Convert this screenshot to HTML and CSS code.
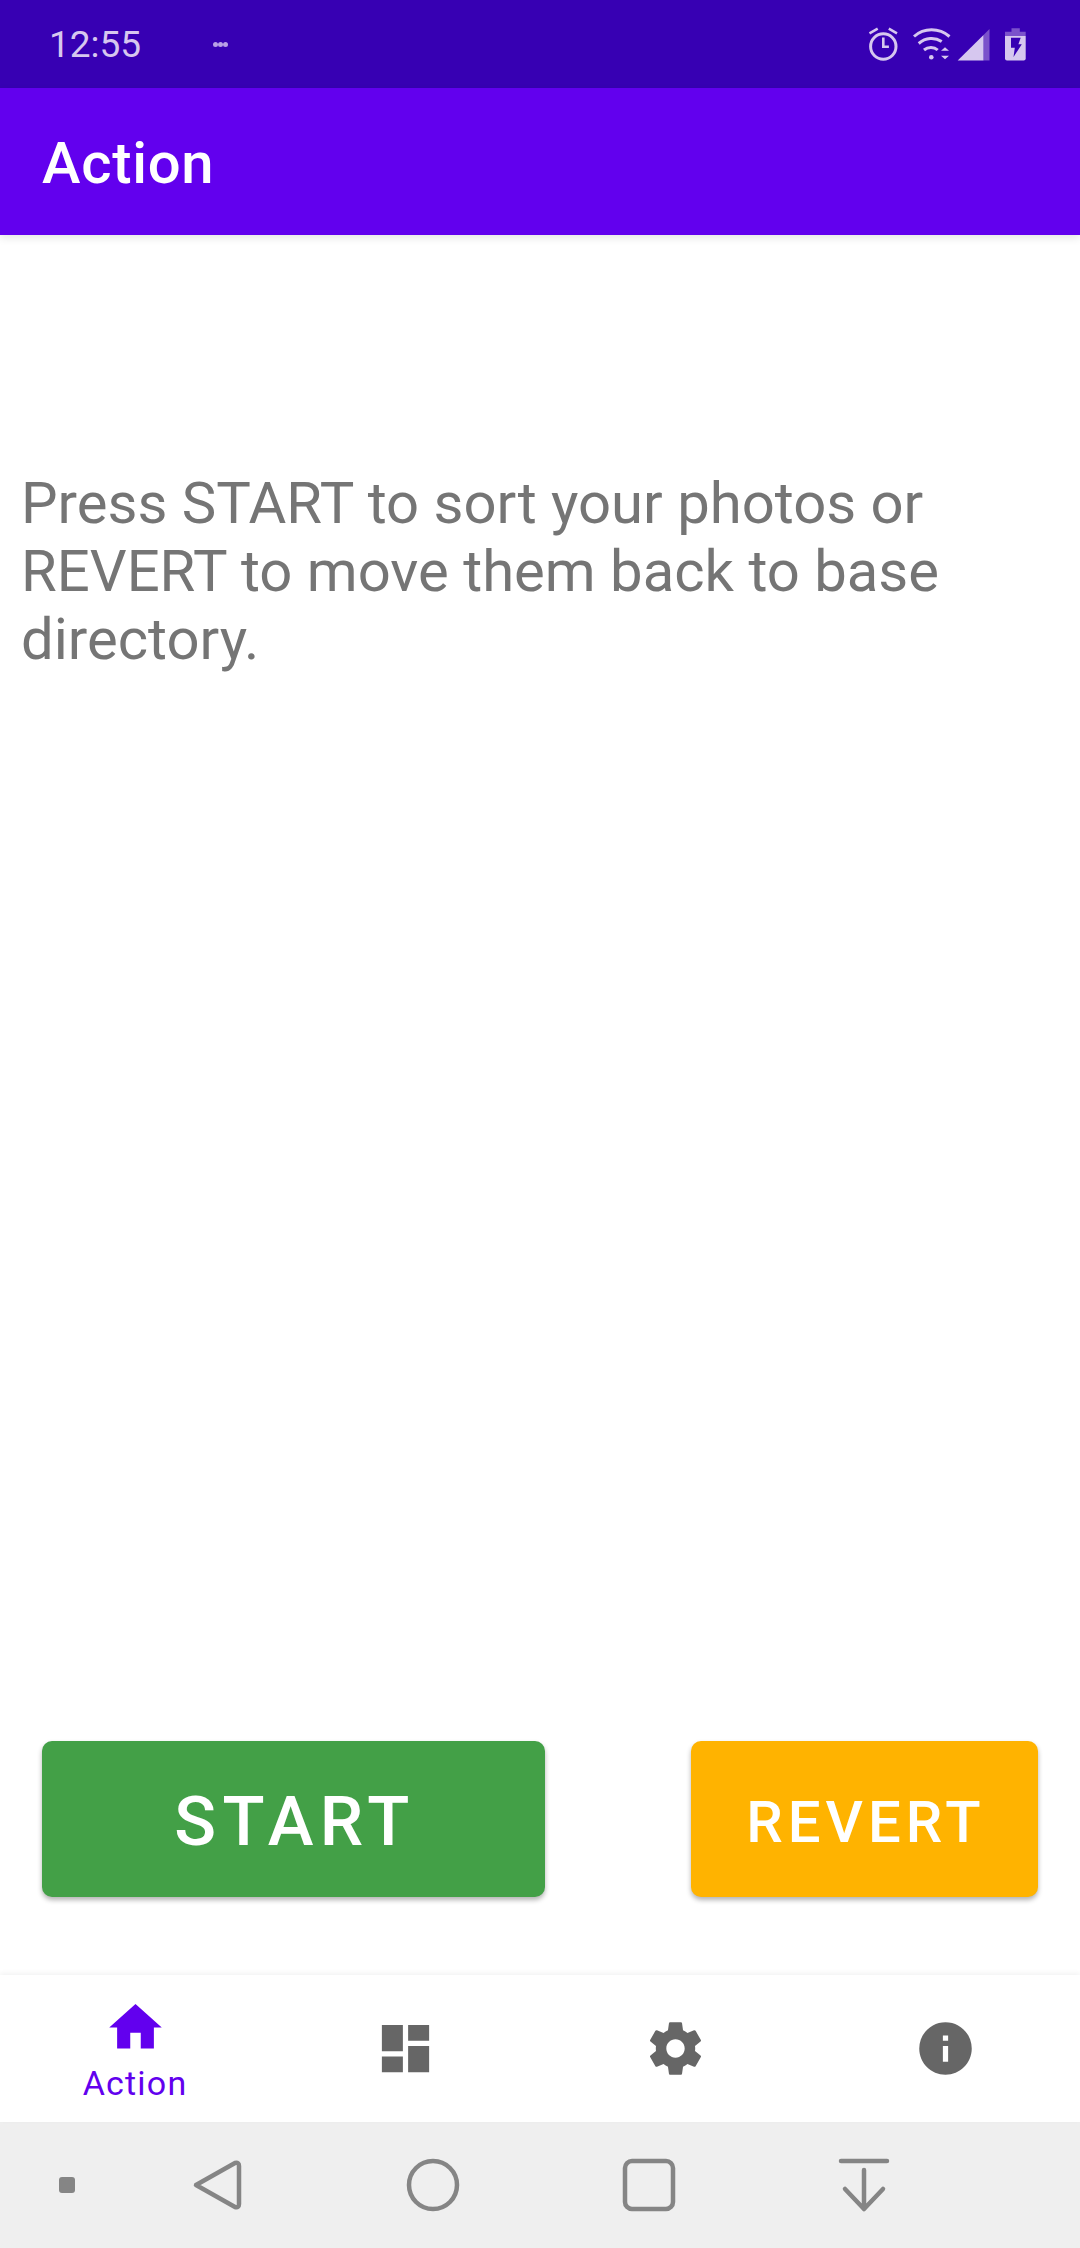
FILE: index.html
```html
<!DOCTYPE html>
<html lang="en">
<head>
  <meta charset="UTF-8" />
  <meta name="viewport" content="width=device-width, initial-scale=1" />
  <title>Action</title>
  <link rel="stylesheet" href="styles.css">
</head>
<body>

  <div class="status-bar">
    <span class="clock">12:55</span>
    <span class="more-dots"><i></i><i></i><i></i></span>
    <div class="status-icons">
      <svg class="alarm" viewBox="868 26 31 36" fill="none" stroke="#d6c7ef" stroke-width="3">
        <circle cx="883.3" cy="46.5" r="12.7" />
        <path d="M869.5 33.3l8.2-4.6M897 33.3l-8.2-4.6M883.3 37.5v9.2h5.6" stroke-width="2.6" />
      </svg>
      <svg class="wifi" viewBox="912 26 40 36">
        <g fill="none" stroke="#d6c7ef" stroke-width="3">
          <path d="M914 36.5c10-9 25-9 35.500 0" />
          <path d="M918.700 43.500c7-6 16-6.500 23-2" />
          <path d="M924 50c4-3.500 10-3.500 13.700 0" />
        </g>
        <circle cx="931.300" cy="57.300" r="2.300" fill="#d6c7ef" />
        <path d="M941 50.700h8l-4-3.500zM941 55.700h8l-4 3.600z" fill="#d6c7ef" />
      </svg>
      <svg class="signal" viewBox="957 27 33 33">
        <path d="M989.500 28v31.500h-6V34z" fill="#7b52cb" />
        <path d="M957.700 59.500L983.500 34v25.500z" fill="#d6c7ef" />
      </svg>
      <svg class="battery" viewBox="1005 27 21 33">
        <path d="M1011.500 27.300h8.300v3.400h5.900V35H1005v-4.300h6.500z" fill="#7b52cb" />
        <path d="M1005 35h20.700v22.500q0 2-2 2H1007q-2 0-2-2z" fill="#d6c7ef" />
        <path d="M1011 36.700h9.700l-2.300 6.600h3.400L1013.500 56l1.300-9.300H1011z" fill="#3700b3" />
      </svg>
    </div>
  </div>

  <div class="app-bar">Action</div>

  <div class="content">
    <p class="message">Press START to sort your photos or REVERT to move them back to base directory.</p>

    <div class="actions">
      <button class="action-button start-button">START</button>
      <button class="action-button revert-button">REVERT</button>
    </div>
  </div>

  <div class="bottom-nav">
    <div class="nav-item active">
      <svg viewBox="0 0 24 24"><path d="M10 20v-6h4v6h5v-8h3L12 3 2 12h3v8z" /></svg>
      <span>Action</span>
    </div>
    <div class="nav-item">
      <svg viewBox="0 0 24 24"><path d="M3 13h8V3H3v10zm0 8h8v-6H3v6zm10 0h8V11h-8v10zm0-18v6h8V3h-8z" /></svg>
    </div>
    <div class="nav-item">
      <svg viewBox="0 0 24 24"><path d="M19.430 12.980c.04-.32.07-.64.07-.98s-.03-.66-.07-.98l2.110-1.650c.19-.15.24-.42.12-.64l-2-3.460c-.12-.22-.39-.3-.61-.22l-2.490 1c-.52-.4-1.080-.73-1.690-.98l-.38-2.650C14.460 2.180 14.250 2 14 2h-4c-.25 0-.46.18-.49.42l-.38 2.650c-.61.25-1.170.59-1.690.98l-2.490-1c-.23-.09-.49 0-.61.22l-2 3.460c-.13.22-.07.49.12.64l2.110 1.650c-.04.32-.07.65-.07.98s.03.66.07.98l-2.110 1.650c-.19.15-.24.42-.12.64l2 3.460c.12.22.39.3.61.22l2.490-1c.52.4 1.080.73 1.690.98l.38 2.650c.03.24.24.42.49.42h4c.25 0 .46-.18.49-.42l.38-2.650c.61-.25 1.170-.59 1.690-.98l2.490 1c.23.09.49 0 .61-.22l2-3.460c.12-.22.07-.49-.12-.64l-2.110-1.650zM12 15.500c-1.930 0-3.500-1.570-3.500-3.500s1.570-3.500 3.500-3.500 3.500 1.570 3.500 3.500-1.570 3.500-3.500 3.500z" /></svg>
    </div>
    <div class="nav-item">
      <svg viewBox="0 0 24 24"><path d="M12 2C6.480 2 2 6.480 2 12s4.480 10 10 10 10-4.480 10-10S17.520 2 12 2zm1 15h-2v-6h2v6zm0-8h-2V7h2v2z" /></svg>
    </div>
  </div>

  <div class="system-nav">
    <span class="sys-dot"></span>
    <svg viewBox="0 0 56 56"><path d="M6 28L45 6q4-1 4 3v38q0 4-4 3z" /></svg>
    <svg viewBox="0 0 56 56"><circle cx="28" cy="28" r="24" /></svg>
    <svg viewBox="0 0 56 56"><rect x="4" y="4" width="48" height="48" rx="7" /></svg>
    <svg viewBox="0 0 56 56"><path d="M5 4h46M28 13v39M9 32l19 20 19-20" /></svg>
  </div>

</body>
</html>
```

FILE: styles.css
```css
* {
  box-sizing: border-box;
}

body {
  margin: 0;
  width: 1080px;
  height: 2248px;
  display: flex;
  flex-direction: column;
  font-family: Roboto, "Liberation Sans", sans-serif;
  background: #fff;
  overflow: hidden;
}

.status-bar {
  height: 88px;
  flex: none;
  display: flex;
  align-items: center;
  padding: 0 54px 0 49px;
  background: #3700b3;
}

.clock {
  font-size: 37px;
  color: #d6c7ef;
}

.more-dots {
  display: flex;
  margin-left: 72px;
}

.more-dots i {
  width: 5px;
  height: 5px;
  border-radius: 50%;
  background: #b9a0e6;
}

.status-icons {
  margin-left: auto;
  display: flex;
  align-items: center;
}

.status-icons svg {
  display: block;
  height: 36px;
}

.alarm {
  width: 31px;
  margin-right: 13px;
}

.wifi {
  width: 40px;
  margin-right: 5px;
}

.signal {
  width: 33px;
  height: 33px !important;
  margin-right: 15px;
}

.battery {
  width: 21px;
  height: 33px !important;
}

.app-bar {
  height: 147px;
  flex: none;
  display: flex;
  align-items: center;
  padding: 2px 0 0 42px;
  background: #6200ee;
  color: #fff;
  font-size: 58px;
  font-weight: 500;
  letter-spacing: 0.7px;
  box-shadow: 0 3px 8px rgba(0, 0, 0, 0.1);
  position: relative;
}

.content {
  flex: 1;
  display: flex;
  flex-direction: column;
}

.message {
  margin: 234px 0 0;
  padding: 0 21px;
  font-size: 58px;
  line-height: 68px;
  color: #757575;
}

.actions {
  margin-top: auto;
  margin-bottom: 78px;
  padding: 0 42px;
  display: flex;
  justify-content: space-between;
}

.action-button {
  height: 156px;
  padding: 5px 0 0 3px;
  border: none;
  border-radius: 10px;
  color: #fff;
  font-family: inherit;
  font-weight: 500;
  box-shadow: 0 3px 5px rgba(0, 0, 0, 0.3);
}

.start-button {
  width: 503px;
  background-color: #43a047;
  font-size: 69px;
  letter-spacing: 6.4px;
}

.revert-button {
  width: 347px;
  background-color: #ffb300;
  font-size: 58px;
  letter-spacing: 5px;
}

.bottom-nav {
  height: 147px;
  flex: none;
  display: grid;
  grid-template-columns: repeat(4, 1fr);
  background: #fff;
  box-shadow: 0 -2px 5px rgba(0, 0, 0, 0.05);
  position: relative;
}

.nav-item {
  display: flex;
  flex-direction: column;
  align-items: center;
  padding-top: 42px;
  fill: #666;
}

.nav-item svg {
  display: block;
  width: 63px;
  height: 63px;
}

.nav-item.active {
  padding-top: 21px;
  fill: #6200ee;
  color: #6200ee;
  font-size: 34px;
  letter-spacing: 1.2px;
}

.nav-item.active span {
  margin-top: 4px;
  line-height: 41px;
}

.system-nav {
  height: 126px;
  flex: none;
  display: grid;
  grid-template-columns: 110px repeat(4, 215.5px);
  justify-items: center;
  align-items: center;
  background: #efefef;
}

.system-nav svg {
  width: 56px;
  height: 56px;
  fill: none;
  stroke: #858585;
  stroke-width: 4.5;
  stroke-linecap: round;
  stroke-linejoin: round;
}

.sys-dot {
  justify-self: start;
  margin-left: 59px;
  width: 16px;
  height: 16px;
  border-radius: 3px;
  background: #858585;
}
```
